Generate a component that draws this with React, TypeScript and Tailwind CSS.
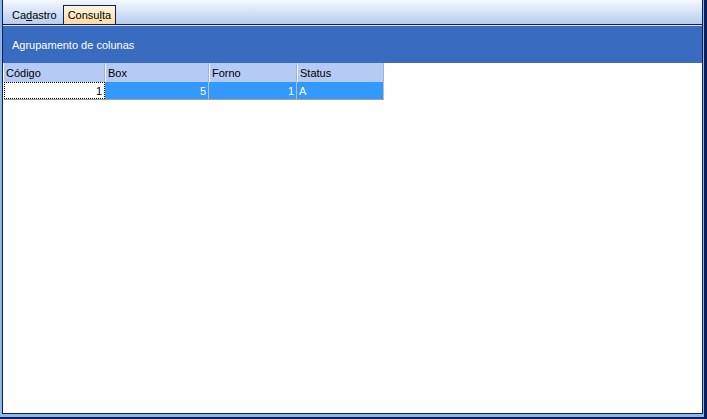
import React from "react";

const columns = [
  { key: "codigo", label: "Código", width: "w-[101px]" },
  { key: "box", label: "Box", width: "w-[104px]" },
  { key: "forno", label: "Forno", width: "w-[88px]" },
  { key: "status", label: "Status", width: "w-[87px]" },
];

const App = () => {
  return (
    <div
      className="w-[707px] h-[419px] bg-[#0a1f5c] flex flex-col overflow-hidden text-[11px] text-black"
      style={{ fontFamily: "Tahoma, 'Liberation Sans', Arial, sans-serif" }}
    >
      <div className="flex-1 flex flex-col border-l-2 border-r-[1px] border-b-[3px] border-[#8fb6e8] mr-[3px] mb-[2px]">
        <div className="flex-1 flex flex-col bg-white border-l border-r border-b border-[#0a1f5c]">
          {/* tab strip */}
          <div className="h-[24px] flex items-end pl-[3px] bg-gradient-to-b from-[#f4f8fe] to-[#b7cdee]">
            <div className="h-[19px] pl-[6px] pr-[6px] pt-[1px] flex items-center">
              <span>
                Ca<span className="underline">d</span>astro
              </span>
            </div>
            <div className="h-[19px] px-[4px] pt-[1px] flex items-center border border-b-0 border-[#0a1f5c] bg-gradient-to-b from-[#fff6e2] to-[#ffd9a3]">
              <span>
                Consu<span className="underline">l</span>ta
              </span>
            </div>
          </div>
          <div className="h-[1px] bg-[#0a1f5c]" />
          <div className="h-[1px] bg-[#e6def2]" />
          {/* group by band */}
          <div className="h-[37px] bg-[#396cc0] text-white flex items-center pl-[9px] pt-[1px]">
            Agrupamento de colunas
          </div>
          {/* grid */}
          <div className="pl-[1px]">
            <div className="flex h-[19px] bg-[#b5cbf3] w-max">
              {columns.map((c, i) => (
                <div
                  key={c.key}
                  className={`${c.width} flex items-center pl-[2px] pt-[1px] ${
                    i > 0 ? "border-l border-l-[#eef3fc]" : ""
                  } border-r border-r-[#9fb4d8]`}
                >
                  {c.label}
                </div>
              ))}
            </div>
            <div className="flex h-[18px] w-max border-b border-[#a0a0a0]">
              <div className="w-[101px] flex items-center justify-end pr-[2px] pt-[1px] bg-white border border-dotted border-black">
                1
              </div>
              <div className="w-[104px] flex items-center justify-end pr-[2px] pt-[1px] bg-[#3399ff] text-white border-r border-[#bfbfbf]">
                5
              </div>
              <div className="w-[88px] flex items-center justify-end pr-[2px] pt-[1px] bg-[#3399ff] text-white border-r border-[#bfbfbf]">
                1
              </div>
              <div className="w-[87px] flex items-center pl-[2px] pt-[1px] bg-[#3399ff] text-white border-r border-[#bfbfbf]">
                A
              </div>
            </div>
          </div>
        </div>
      </div>
    </div>
  );
};

export default App;
